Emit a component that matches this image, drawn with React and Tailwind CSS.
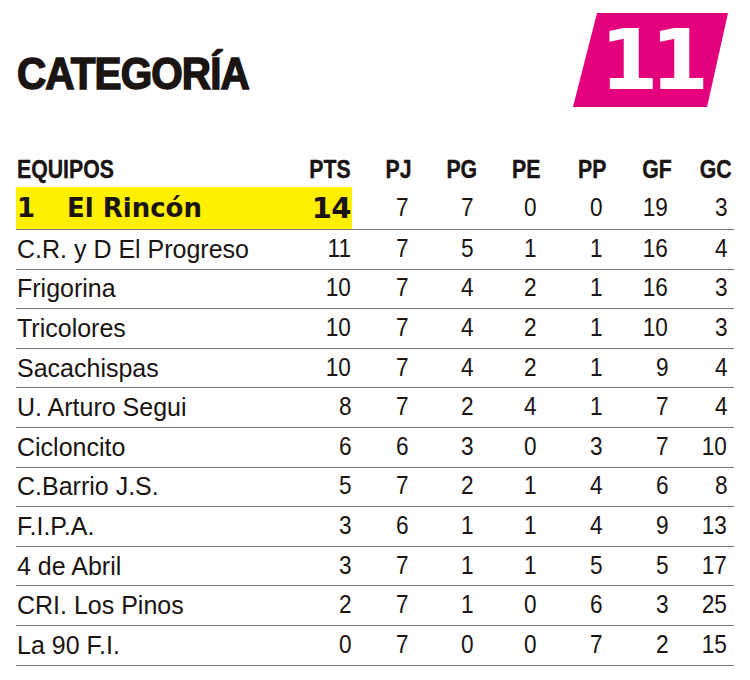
const leader = ['El Rincón', 14, 7, 7, 0, 0, 19, 3]

const teams = [
  ['C.R. y D El Progreso', 11, 7, 5, 1, 1, 16, 4],
  ['Frigorina', 10, 7, 4, 2, 1, 16, 3],
  ['Tricolores', 10, 7, 4, 2, 1, 10, 3],
  ['Sacachispas', 10, 7, 4, 2, 1, 9, 4],
  ['U. Arturo Segui', 8, 7, 2, 4, 1, 7, 4],
  ['Cicloncito', 6, 6, 3, 0, 3, 7, 10],
  ['C.Barrio J.S.', 5, 7, 2, 1, 4, 6, 8],
  ['F.I.P.A.', 3, 6, 1, 1, 4, 9, 13],
  ['4 de Abril', 3, 7, 1, 1, 5, 5, 17],
  ['CRI. Los Pinos', 2, 7, 1, 0, 6, 3, 25],
  ['La 90 F.I.', 0, 7, 0, 0, 7, 2, 15],
]

const cols = ['PJ', 'PG', 'PE', 'PP', 'GF', 'GC']
const grid = 'grid grid-cols-[336px_60px_65px_63px_66px_66px_59px] pr-[3px]'

function Num({ v, pad = true }) {
  return (
    <div className={`text-right ${pad ? 'pr-[4px]' : ''}`}>
      <span className="inline-block text-[26px] leading-none scale-x-[0.87] origin-right">{v}</span>
    </div>
  )
}

function Head({ children }) {
  return (
    <span className="inline-block scale-x-[0.85] origin-right [-webkit-text-stroke:0.4px]">{children}</span>
  )
}

export default function App() {
  return (
    <div className="w-[750px] h-[680px] bg-white text-[#1a1412] font-['Liberation_Sans',Arial,sans-serif]">
      {/* Top: title + round badge */}
      <div className="flex items-start h-[150px]">
        <h1 className="mt-[51px] ml-[17px] text-[45px] leading-none font-bold tracking-[-1px] scale-x-[0.9] origin-left [-webkit-text-stroke:1.5px]">
          CATEGORÍA
        </h1>
        <div className="ml-auto mr-[22px] mt-[13px] w-[155px] h-[94px] bg-[#e4007c] [clip-path:polygon(15.5%_0,100%_0,86.5%_100%,0_100%)] flex items-center">
          <span className="ml-[27px] text-white text-[84px] leading-none font-bold tracking-[-8px] font-['DejaVu_Sans',sans-serif]">
            11
          </span>
        </div>
      </div>

      <div className="mx-[16px]">
        {/* Header row */}
        <div className={`${grid} h-[37px] items-end pb-[5px] text-[25px] leading-none font-bold`}>
          <div className="flex justify-between pl-[1px] pr-[1px]">
            <span className="inline-block scale-x-[0.85] origin-left [-webkit-text-stroke:0.4px]">EQUIPOS</span>
            <Head>PTS</Head>
          </div>
          {cols.map((c) => (
            <div key={c} className="text-right">
              <Head>{c}</Head>
            </div>
          ))}
        </div>

        {/* Leader row */}
        <div className={`${grid} h-[43px] border-b border-[#777]`}>
          <div className="flex items-center justify-between bg-[#fff000] pl-[1px] pr-[1px] font-['DejaVu_Sans',sans-serif] font-bold leading-none">
            <span className="text-[26px] flex">
              <span className="w-[50px]">1</span>
              <span>{leader[0]}</span>
            </span>
            <span className="text-[29px] tracking-[-0.5px]">{leader[1]}</span>
          </div>
          {leader.slice(2).map((v, i) => (
            <div key={i} className="self-center">
              <Num v={v} />
            </div>
          ))}
        </div>

        {teams.map((t) => (
          <div key={t[0]} className={`${grid} h-[39.6px] items-center border-b border-[#777]`}>
            <div className="flex justify-between items-center pl-[1px] pr-[1px]">
              <span className="text-[25px] leading-none">{t[0]}</span>
              <Num v={t[1]} pad={false} />
            </div>
            {t.slice(2).map((v, i) => (
              <Num key={i} v={v} />
            ))}
          </div>
        ))}
      </div>
    </div>
  )
}
